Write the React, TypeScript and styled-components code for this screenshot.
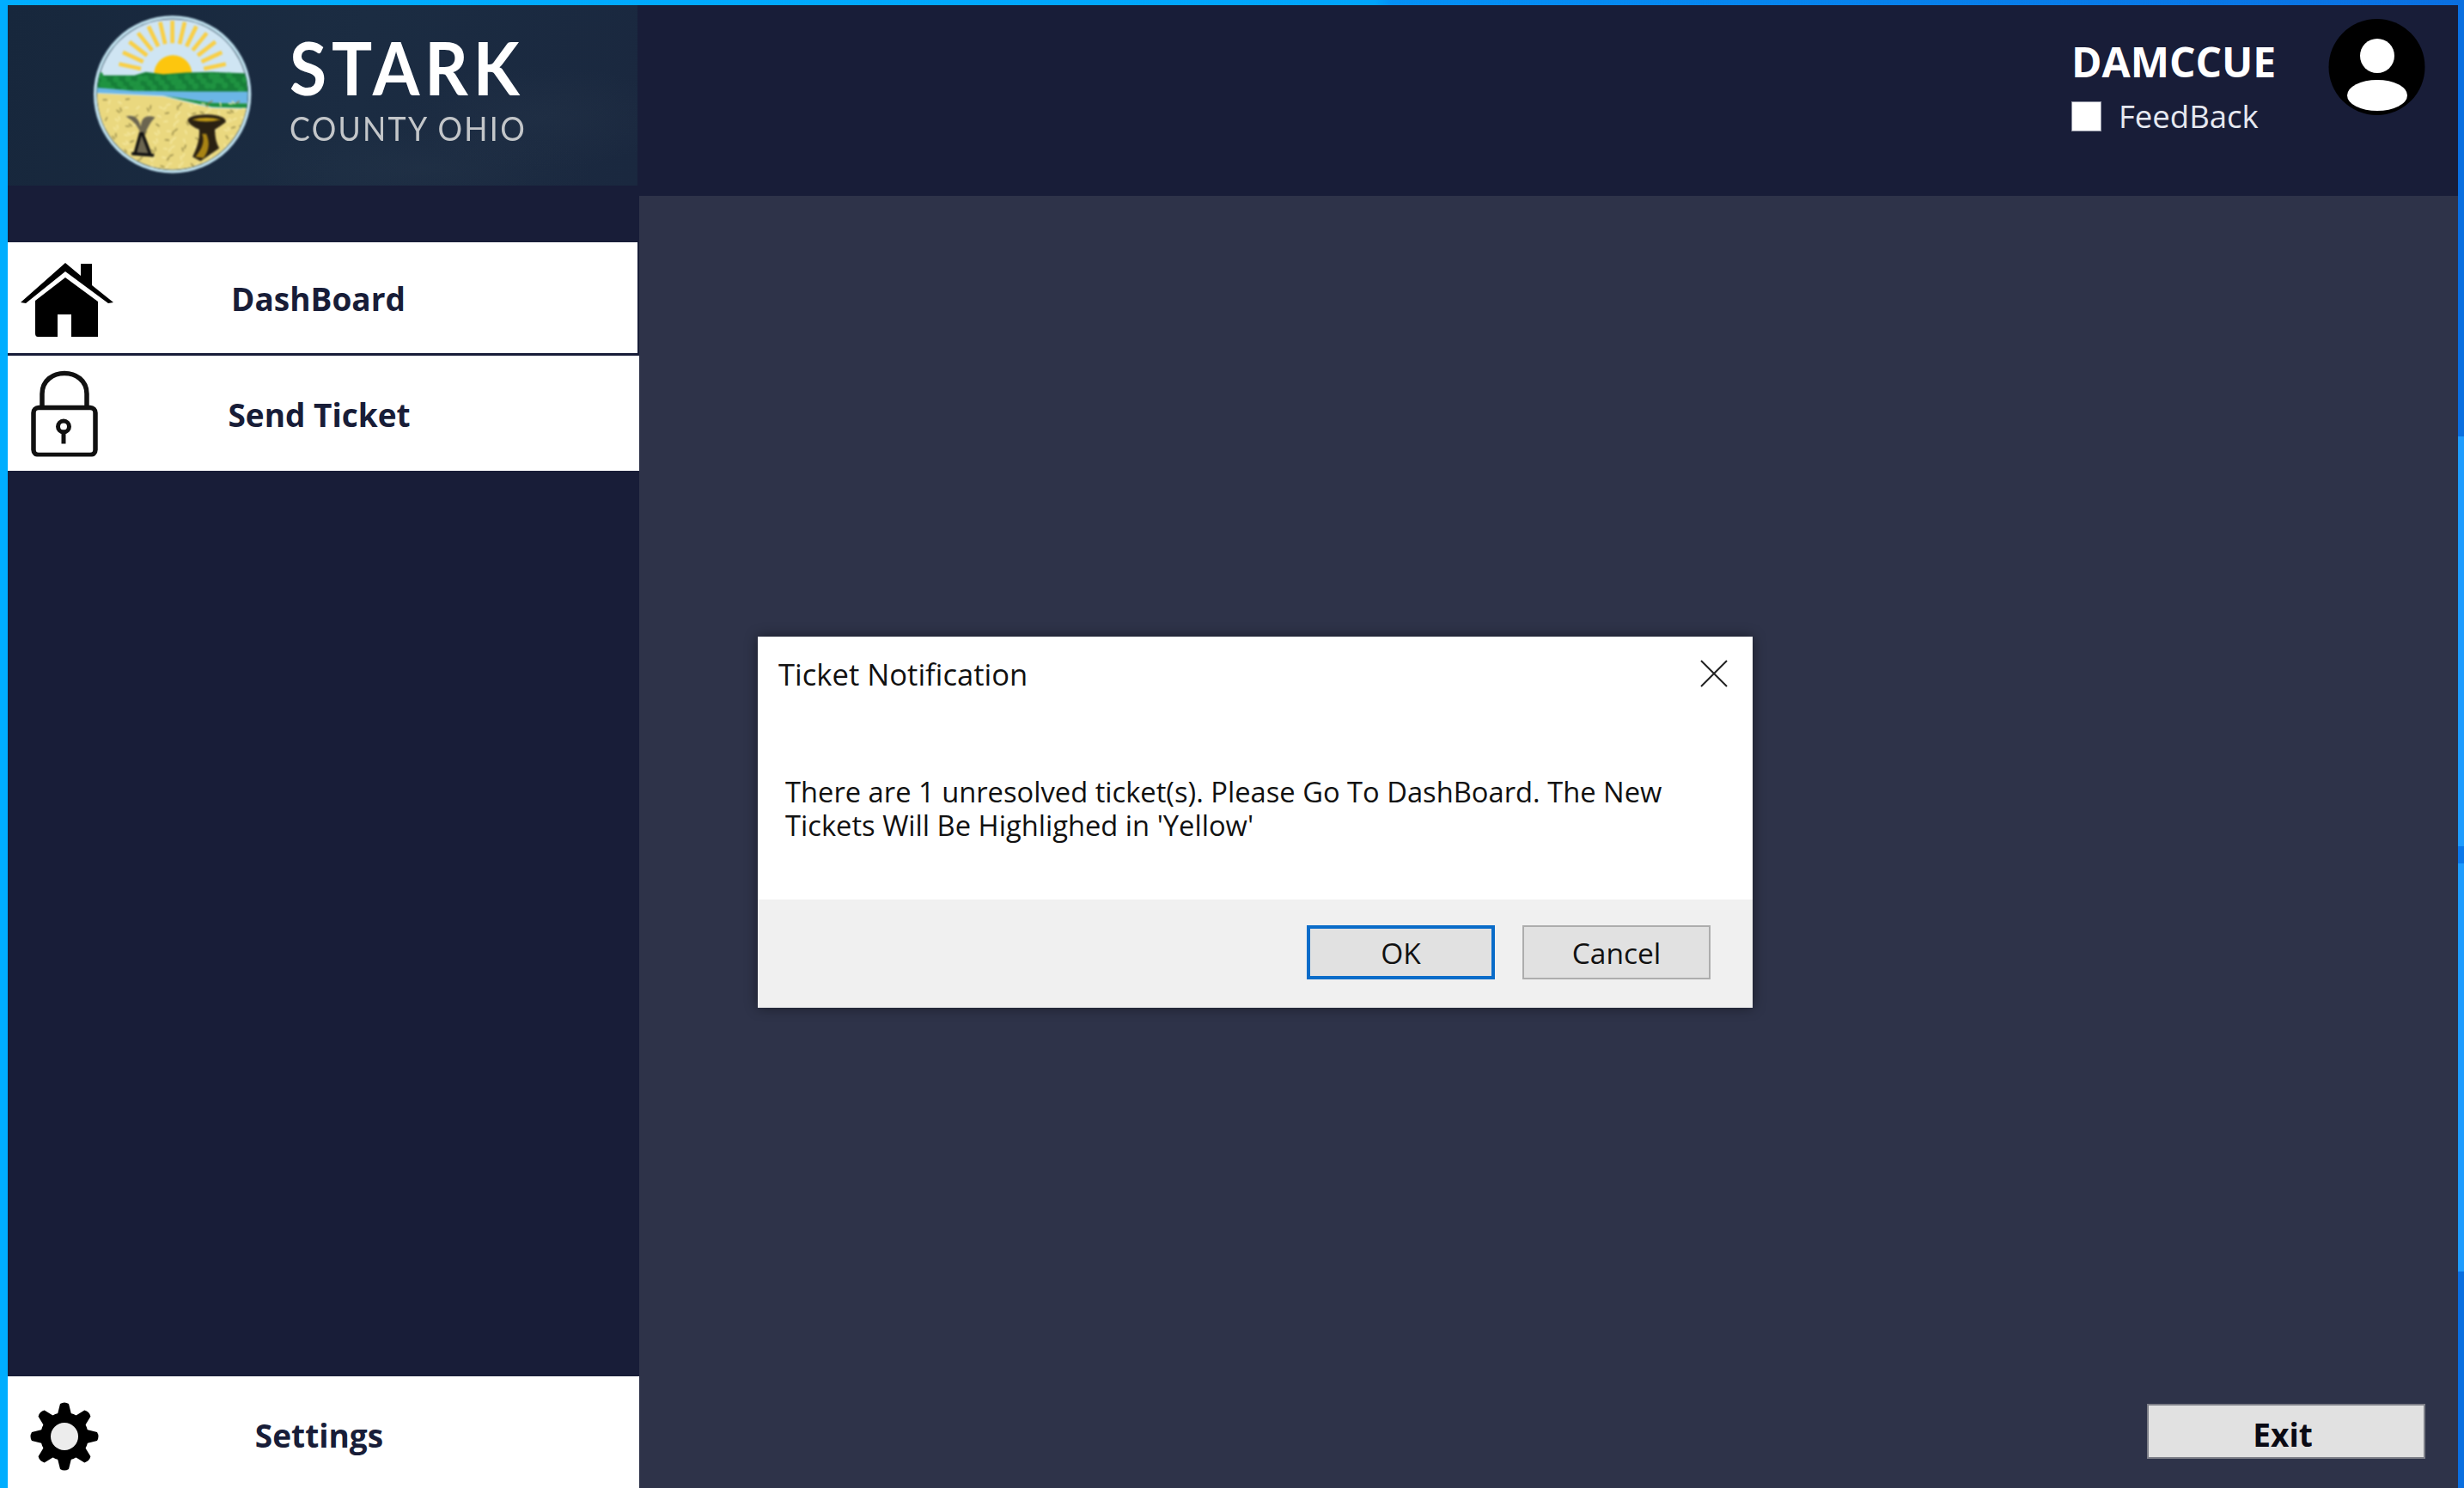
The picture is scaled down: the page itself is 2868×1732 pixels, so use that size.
import React from 'react';
import styled, { createGlobalStyle } from 'styled-components';

const GlobalStyle = createGlobalStyle`
    html, body {
        margin: 0;
        padding: 0;
        background: #181d38;
    }
    * {
        box-sizing: border-box;
    }
`;

const UI_FONT = `"Open Sans", "Noto Sans", sans-serif`;

// wheat flecks for the seal, fixed so the picture stays the same on each run
const FLECKS = Array.from({ length: 170 }, (_, i) => ({
    x: 90 + ((i * 97) % 490),
    y: 345 + ((i * 53) % 235),
    r: (i * 37) % 180,
}));

const LEAVES = Array.from({ length: 44 }, (_, i) => ({
    x: 80 + ((i * 131) % 510),
    y: 262 + ((i * 29) % 50),
}));

const RAYS = Array.from({ length: 13 }, (_, i) => -78 + i * 13);

function Seal() {
    return (
        <SealSvg viewBox="58 52 550 553">
            <defs>
                <clipPath id="sealClip">
                    <circle cx="332" cy="328" r="262" />
                </clipPath>
            </defs>
            <circle cx="332" cy="328" r="274" fill="#c4e6f3" />
            <circle cx="332" cy="328" r="264" fill="#0e2033" />
            <g clipPath="url(#sealClip)">
                <rect x="60" y="50" width="550" height="560" fill="#cfe5f3" />
                {RAYS.map((angle) => (
                    <rect
                        key={angle}
                        x="325"
                        y="72"
                        width="14"
                        height="78"
                        fill="#f9cf45"
                        transform={`rotate(${angle} 332 262)`}
                    />
                ))}
                <circle cx="334" cy="258" r="66" fill="#fdc60e" />
                <path
                    d="M60 262 L200 262 L240 250 L300 258 L380 252 L470 250 L610 256 L610 330 L60 316 Z"
                    fill="#167f38"
                />
                {LEAVES.map((l, i) => (
                    <circle key={i} cx={l.x} cy={l.y} r="11" fill="#1f9341" />
                ))}
                <path d="M60 304 L200 316 L400 318 L610 318 L610 360 L470 358 L300 332 L60 322 Z" fill="#6bb6e6" />
                <path d="M300 332 L470 358 L610 360 L610 376 L470 372 Z" fill="#1c8f3f" />
                <path d="M60 324 L300 336 L470 376 L610 380 L610 610 L60 610 Z" fill="#ead87f" />
                {FLECKS.map((f, i) => (
                    <rect
                        key={i}
                        x={f.x}
                        y={f.y}
                        width="15"
                        height="4"
                        fill={i % 3 === 0 ? '#8f8346' : '#f7eca8'}
                        transform={`rotate(${f.r} ${f.x} ${f.y})`}
                    />
                ))}
                <path
                    d="M170 405 Q215 430 222 470 L196 540 L265 545 L235 470 Q250 430 272 408 Q225 392 222 440 Q210 392 170 405 Z"
                    fill="#6b6550"
                />
                <path d="M222 460 L200 540 M226 460 L256 540 M190 534 L268 540" stroke="#111" strokeWidth="10" fill="none" />
                <path
                    d="M385 420 Q385 400 450 398 Q520 400 518 424 Q490 445 480 450 Q480 490 495 515 L430 560 L402 545 Q430 490 425 450 Q395 440 385 420 Z"
                    fill="#2a2112"
                />
                <path d="M400 416 Q450 402 500 416 Q450 430 400 416 Z" fill="#c29a17" />
                <path d="M435 465 Q450 500 412 545 L440 550 Q470 510 450 465 Z" fill="#a98414" />
            </g>
        </SealSvg>
    );
}

function HomeIcon() {
    return (
        <svg width="108" height="88" viewBox="0 0 108 88">
            <path d="M0 48 L52 2 L70 17 L70 3 L83 3 L83 28 L108 48 L102 49 L52 12 L6 49 Z" fill="#000" />
            <path d="M52 19 L90 47 L90 88 L59 88 L59 62 L43 62 L43 88 L20 88 Q17 88 17 84 L17 46 Z" fill="#000" />
        </svg>
    );
}

function LockIcon() {
    return (
        <svg width="78" height="101" viewBox="0 0 78 101">
            <path d="M13 44 L13 28 C13 -4 65 -4 65 28 L65 44" fill="none" stroke="#111" strokeWidth="5.5" />
            <rect x="3" y="44" width="72" height="55" rx="6" fill="none" stroke="#111" strokeWidth="5.5" />
            <circle cx="38" cy="66" r="6.5" fill="none" stroke="#111" strokeWidth="5" />
            <rect x="35.5" y="70" width="5" height="16" fill="#111" />
        </svg>
    );
}

function GearIcon() {
    const teeth = [0, 45, 90, 135, 180, 225, 270, 315];
    return (
        <svg width="80" height="80" viewBox="0 0 80 80">
            {teeth.map((deg) => (
                <path key={deg} d="M32 14 L35 2 Q40 -1 45 2 L48 14 Z" fill="#000" transform={`rotate(${deg} 40 40)`} />
            ))}
            <circle cx="40" cy="40" r="18" fill="none" stroke="#000" strokeWidth="20" />
            <circle cx="40" cy="40" r="16" fill="#ececec" />
        </svg>
    );
}

function App() {
    return (
        <>
            <GlobalStyle />
            <WindowFrame>
                <Sidebar>
                    <LogoPanel>
                        <Seal />
                        <LogoText>
                            <LogoTitle>STARK</LogoTitle>
                            <LogoSubtitle>COUNTY OHIO</LogoSubtitle>
                        </LogoText>
                    </LogoPanel>
                    <NavList>
                        <NavItem $short>
                            <NavIcon $left={15} $down={1}><HomeIcon /></NavIcon>
                            <NavLabel>DashBoard</NavLabel>
                        </NavItem>
                        <NavItem>
                            <NavIcon $left={27}><LockIcon /></NavIcon>
                            <NavLabel>Send Ticket</NavLabel>
                        </NavItem>
                    </NavList>
                    <SettingsItem>
                        <NavIcon $left={26} $down={5}><GearIcon /></NavIcon>
                        <NavLabel>Settings</NavLabel>
                    </SettingsItem>
                </Sidebar>
                <MainColumn>
                    <TopBar>
                        <UserBlock>
                            <UserName>DAMCCUE</UserName>
                            <FeedbackRow>
                                <FeedbackBox />
                                <FeedbackLabel>FeedBack</FeedbackLabel>
                            </FeedbackRow>
                        </UserBlock>
                        <svg width="113" height="112" viewBox="0 0 113 112">
                            <circle cx="56.5" cy="56" r="56" fill="#000" />
                            <circle cx="57" cy="43" r="20" fill="#fff" />
                            <ellipse cx="57" cy="89" rx="35" ry="18" fill="#fff" />
                        </svg>
                    </TopBar>
                    <Content>
                        <ExitButton>Exit</ExitButton>
                        <Dialog>
                            <DialogBody>
                                <DialogHeader>
                                    <DialogTitle>Ticket Notification</DialogTitle>
                                    <CloseIcon width="34" height="34" viewBox="0 0 34 34">
                                        <path d="M2 2 L32 32 M32 2 L2 32" stroke="#222" strokeWidth="2" />
                                    </CloseIcon>
                                </DialogHeader>
                                <DialogText>
                                    There are 1 unresolved ticket(s). Please Go To DashBoard. The New
                                    <br />
                                    Tickets Will Be Highlighed in 'Yellow'
                                </DialogText>
                            </DialogBody>
                            <DialogFooter>
                                <DialogButton $primary>OK</DialogButton>
                                <DialogButton>Cancel</DialogButton>
                            </DialogFooter>
                        </Dialog>
                    </Content>
                </MainColumn>
            </WindowFrame>
        </>
    );
}

const WindowFrame = styled.div`
    width: 2868px;
    height: 1732px;
    overflow: hidden;
    display: grid;
    grid-template-columns: 735px 1fr;
    padding: 6px 7px 0 9px;
    background:
        linear-gradient(
                180deg,
                #0a6fe0 0,
                #0a6fe0 508px,
                #1e9cff 508px,
                #1e9cff 985px,
                #0a78ea 985px,
                #0a78ea 1005px,
                #1e9cff 1005px,
                #1e9cff 1480px,
                #0a6fe0 1480px
            )
            right top / 7px 100% no-repeat,
        linear-gradient(90deg, #00aeff 0, #00a4fb 1600px, #0490f5 1620px, #0a6fe0 2868px);
    font-family: ${UI_FONT};
`;

const Sidebar = styled.aside`
    display: flex;
    flex-direction: column;
    background: #181d38;
`;

const LogoPanel = styled.div`
    width: 733px;
    height: 210px;
    display: flex;
    align-items: flex-start;
    background:
        radial-gradient(ellipse 160px 60px at 620px 130px, rgba(70, 85, 100, 0.1), transparent),
        radial-gradient(ellipse 200px 50px at 480px 190px, rgba(70, 85, 100, 0.1), transparent),
        linear-gradient(100deg, #17273c 0%, #1b2c42 55%, #1a283f 100%);
`;

const SealSvg = styled.svg`
    width: 184px;
    height: 186px;
    margin: 11px 0 0 100px;
    flex-shrink: 0;
    filter: blur(0.8px);
`;

const LogoText = styled.div`
    display: flex;
    flex-direction: column;
    margin-left: 44px;
    font-family: "Lato", "Open Sans", sans-serif;
    white-space: nowrap;
    transform: scaleX(0.915);
    transform-origin: left center;
`;

const LogoTitle = styled.div`
    margin-top: 30px;
    font-size: 86px;
    line-height: 84px;
    font-weight: 700;
    letter-spacing: 6.5px;
    color: #fff;
`;

const LogoSubtitle = styled.div`
    margin-top: 6px;
    font-size: 39px;
    line-height: 46px;
    letter-spacing: 2.5px;
    color: #c3c6c9;
`;

const NavList = styled.nav`
    margin-top: 66px;
    display: flex;
    flex-direction: column;
    gap: 3px;
`;

const NavItem = styled.div<{ $short?: boolean }>`
    position: relative;
    width: ${(p) => (p.$short ? '733px' : '735px')};
    height: ${(p) => (p.$short ? '129px' : '134px')};
    display: flex;
    align-items: center;
    justify-content: center;
    padding: 2px 10px 0 0;
    background: #fff;
`;

const SettingsItem = styled(NavItem)`
    height: 130px;
    margin-top: auto;
    padding-top: 7px;
`;

const NavIcon = styled.span<{ $left: number; $down?: number }>`
    position: absolute;
    left: ${(p) => p.$left}px;
    top: calc(50% + ${(p) => p.$down ?? 0}px);
    transform: translateY(-50%);
    display: flex;
`;

const NavLabel = styled.span`
    font-size: 37px;
    font-weight: 700;
    color: #181d38;
`;

const MainColumn = styled.div`
    display: flex;
    flex-direction: column;
    min-width: 0;
`;

const TopBar = styled.header`
    height: 222px;
    flex-shrink: 0;
    display: flex;
    justify-content: flex-end;
    align-items: flex-start;
    gap: 55px;
    padding: 16px 38px 0 0;
    background: #181d38;
`;

const UserBlock = styled.div`
    display: flex;
    flex-direction: column;
    width: 244px;
    margin-top: 20px;
`;

const UserName = styled.div`
    font-size: 48px;
    line-height: 60px;
    font-weight: 700;
    white-space: nowrap;
    color: #fff;
`;

const FeedbackRow = styled.div`
    display: flex;
    align-items: center;
    gap: 20px;
    margin-top: 14px;
`;

const FeedbackBox = styled.span`
    width: 35px;
    height: 35px;
    background: #fff;
    border: 1px solid #8f93a3;
`;

const FeedbackLabel = styled.span`
    font-size: 36.5px;
    line-height: 38px;
    color: #e6e8f0;
`;

const Content = styled.main`
    position: relative;
    flex: 1;
    display: flex;
    flex-direction: column;
    align-items: flex-end;
    justify-content: flex-end;
    padding: 0 38px 34px 0;
    background: #2e3349;
`;

const ExitButton = styled.button`
    width: 324px;
    height: 64px;
    padding: 7px 8px 0 0;
    font-family: ${UI_FONT};
    font-size: 37px;
    font-weight: 700;
    color: #0a0a14;
    background: #e1e1e1;
    border: 2px solid #7d7f88;
`;

const Dialog = styled.div`
    position: absolute;
    left: 138px;
    top: 513px;
    width: 1158px;
    height: 432px;
    display: flex;
    flex-direction: column;
    background: #fff;
    box-shadow: 0 0 14px rgba(0, 0, 0, 0.45);
`;

const DialogBody = styled.div`
    flex: 1;
    padding: 20px 28px 0 24px;
`;

const DialogHeader = styled.div`
    display: flex;
    align-items: center;
    justify-content: space-between;
`;

const DialogTitle = styled.div`
    font-size: 34.6px;
    line-height: 48px;
    color: #111;
`;

const CloseIcon = styled.svg`
    display: block;
    margin-top: -2px;
`;

const DialogText = styled.p`
    margin: 93px 0 0 8px;
    font-size: 32.7px;
    line-height: 39px;
    color: #111;
    white-space: nowrap;
`;

const DialogFooter = styled.div`
    height: 126px;
    flex-shrink: 0;
    display: flex;
    justify-content: flex-end;
    align-items: flex-start;
    gap: 32px;
    padding: 30px 49px 0 0;
    background: #f0f0f0;
`;

const DialogButton = styled.button<{ $primary?: boolean }>`
    width: 219px;
    height: 63px;
    padding: 0;
    font-family: ${UI_FONT};
    font-size: 33.5px;
    color: #111;
    background: #e1e1e1;
    border: ${(p) => (p.$primary ? '4px solid #0a6cc9' : '2px solid #adadad')};
`;

export default App;
